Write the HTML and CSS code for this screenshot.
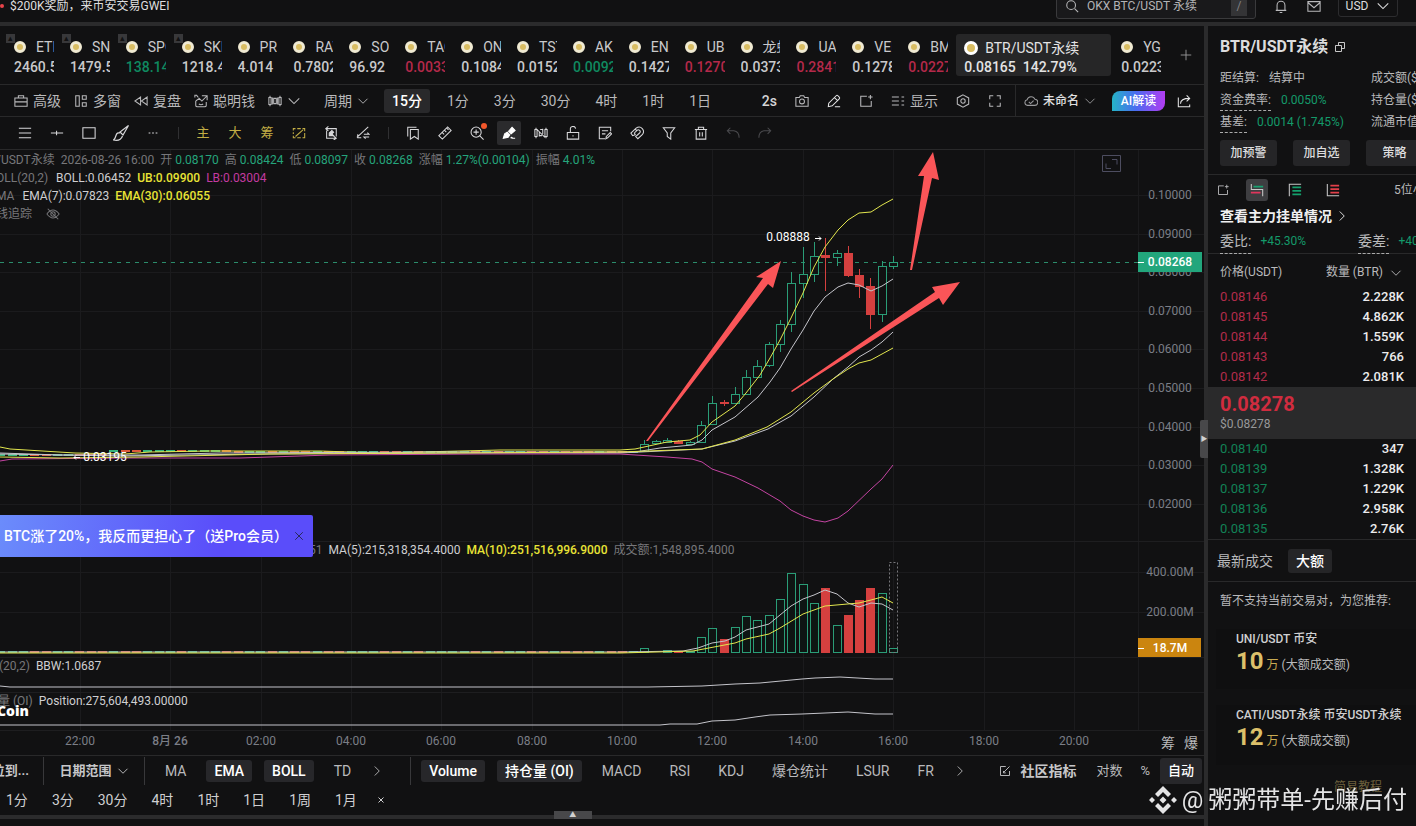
FILE: index.html
```html
<!DOCTYPE html>
<html lang="zh-CN">
<head>
  <meta charset="UTF-8">
  <meta name="viewport" content="width=device-width, initial-scale=1.0">
  <title>BTR/USDT永续</title>
  <link rel="stylesheet" href="styles.css">
</head>
<body>
  <!-- icon sprite -->
  <svg class="sprite" xmlns="http://www.w3.org/2000/svg">
    <symbol id="i-down" viewBox="0 0 16 16"><path d="M2 5l6 6 6-6"/></symbol>
    <symbol id="i-right" viewBox="0 0 16 16"><path d="M5 2l6 6-6 6"/></symbol>
    <symbol id="i-close" viewBox="0 0 16 16"><path d="M3 3l10 10M13 3L3 13"/></symbol>
    <symbol id="i-plus" viewBox="0 0 16 16"><path d="M8 1v14M1 8h14"/></symbol>
    <symbol id="i-search" viewBox="0 0 16 16"><circle cx="7" cy="7" r="5"/><path d="M11 11l4 4"/></symbol>
    <symbol id="i-bell" viewBox="0 0 16 16"><path d="M2 13h12M3.500 13V7a4.500 4.500 0 0 1 9 0v6M6.500 15.500h3"/></symbol>
    <symbol id="i-mail" viewBox="0 0 16 16"><path d="M1 3h14v11H1zM1 4l7 6 7-6"/></symbol>
    <symbol id="i-case" viewBox="0 0 16 16"><path d="M1 4.500h14V14H1zM5 4.500V2h6v2.500M1 9h14"/></symbol>
    <symbol id="i-multi" viewBox="0 0 16 16"><path d="M2 2h4v12H2zM9.500 2H14v4H9.500zM9.500 10H14v4H9.500z"/></symbol>
    <symbol id="i-replay" viewBox="0 0 16 16"><path d="M7.500 3.500v9L1 8zM15 3.500v9L8.500 8z"/></symbol>
    <symbol id="i-smart" viewBox="0 0 16 16"><path d="M5 4L3 1.500H1V4M9 2h6v5M2 8v5q0 1.500 2 1.500h8q2 0 2-1.500V9M2 8l4-3 3 3 6-6M5.500 11.500q2.500 1.500 5 0"/></symbol>
    <symbol id="i-candles" viewBox="0 0 16 16"><path d="M1 4h2.500v8H1zM6.500 5h3v6h-3zM12.500 4H15v8h-2.500zM2.300 2v2M2.300 12v2M5 4v8M11 4v8M13.700 2v2M13.700 12v2"/></symbol>
    <symbol id="i-camera" viewBox="0 0 16 16"><path d="M1 4h4l1-2h4l1 2h4v10H1z"/><circle cx="8" cy="8.500" r="2.800"/></symbol>
    <symbol id="i-pencil" viewBox="0 0 16 16"><path d="M1.500 14.500L2 10.500 10.500 2q1-1 2 0l1.500 1.500q1 1 0 2L6 13.500zM8.500 4L12 7.500M9 14.500h6"/></symbol>
    <symbol id="i-addbox" viewBox="0 0 16 16"><path d="M9 2.500H2V14h12V8M13 1v5M10.500 3.500h5"/></symbol>
    <symbol id="i-list" viewBox="0 0 16 16"><path d="M1 3.500h8M1 8h8M1 12.500h8M12 3.500h3M12 8h3M12 12.500h3"/></symbol>
    <symbol id="i-hex" viewBox="0 0 16 16"><path d="M8 1l6.500 3.500v7L8 15l-6.500-3.500v-7z"/><circle cx="8" cy="8" r="2.500"/></symbol>
    <symbol id="i-full" viewBox="0 0 16 16"><path d="M2 6V2h4M10 2h4v4M14 10v4h-4M6 14H2v-4"/></symbol>
    <symbol id="i-cloud" viewBox="0 0 16 16"><path d="M4 13a3.300 3.300 0 0 1-.4-6.500A4.700 4.700 0 0 1 12.500 6 3.500 3.500 0 0 1 12 13zM5.500 9l2 2 3.500-3.500"/></symbol>
    <symbol id="i-share" viewBox="0 0 16 16"><path d="M1.500 4v10.500h13V12M4 11q0-6 10-6M11 1.500L14.500 5 11 8.500"/></symbol>
    <symbol id="i-menu" viewBox="0 0 16 16"><path d="M1 2.500h14M1 8h14M1 13.500h14"/></symbol>
    <symbol id="i-hline" viewBox="0 0 16 16"><path d="M1 8h14M7.500 5.500v5"/></symbol>
    <symbol id="i-rect" viewBox="0 0 16 16"><path d="M1 2h14v12H1z"/></symbol>
    <symbol id="i-brush" viewBox="0 0 16 16"><path d="M15.500.5L7 7l3 3zM7 8Q4 7 3 10.500T.5 15q7 1.500 9-4"/></symbol>
    <symbol id="i-dots" viewBox="0 0 16 16"><path d="M3 8h2M7 8h2M11 8h2"/></symbol>
    <symbol id="i-slashbox" viewBox="0 0 16 16"><path d="M1.500 5V3H4M6 3h4M12 3h2.500v3M14.500 8v5.500H12M10 13.500H6M4 13.500H1.500V11M1.500 9V7M4 12l8.500-7.500"/></symbol>
    <symbol id="i-loop" viewBox="0 0 16 16"><path d="M2 3h12v9M14 14H3V5M5 .5L2 3l3 2.500M11 11.500l3 2.500-3 2"/><path fill="currentColor" d="M6 11V8l3-3 2 2-2 2 2 2z"/></symbol>
    <symbol id="i-tool" viewBox="0 0 16 16"><path d="M1 13L14 1M2 9.500v4h4M9 9.500h6l-2-2M15 12.500H9l2 2"/></symbol>
    <symbol id="i-mark" viewBox="0 0 16 16"><path d="M5 4h9v11l-4.500-3L5 15zM2 12V1.500h10"/></symbol>
    <symbol id="i-ruler" viewBox="0 0 16 16"><path d="M1 11L11 1l4 4L5 15zM5 7.500l2 2M7.500 5l2 2M10 2.500l2 2"/></symbol>
    <symbol id="i-zoom" viewBox="0 0 16 16"><circle cx="7" cy="7" r="5.800"/><path d="M11 11l4.500 4.500M7 4v6M4 7h6"/></symbol>
    <symbol id="i-marker" viewBox="0 0 16 16"><path fill="currentColor" d="M1.500 14L3 9l3-2 3 3-2 3zM7.500 6l4-4.500L15 5l-4.500 4zM10 14q1-2 2 0h3"/></symbol>
    <symbol id="i-wave" viewBox="0 0 16 16"><path d="M1 4h2.500v8H1zM12.500 4H15v8h-2.500zM2.300 2v2M2.300 12v2M13.700 2v2M13.700 12v2M3.500 4l9 9M6 12V7M10 3v6M7 4h3M6 11h3"/></symbol>
    <symbol id="i-lock" viewBox="0 0 16 16"><path d="M1.500 7.500h13V15h-13zM5 7.500V4a3 3 0 0 1 6-1M8 10.500v1.500"/></symbol>
    <symbol id="i-note" viewBox="0 0 16 16"><path d="M14.500 6V1.500h-13v13H8M4.500 5.500h7M4.500 9h4M9 14.500l.5-2.500 4.500-4.500 1.500 1.500-4.500 4.500z"/></symbol>
    <symbol id="i-magnet" viewBox="0 0 16 16"><path d="M6 10L3 11 1 8l6-5.500Q11-.5 14 3t0 7l-5 4.500-2.500-2.500L11 8q1.500-1.500 0-3T8 5L5 8zM6 3.500L8 5.500"/></symbol>
    <symbol id="i-filter" viewBox="0 0 16 16"><path d="M1.500 2h13L10 8v7l-4-3V8z"/></symbol>
    <symbol id="i-trash" viewBox="0 0 16 16"><path d="M1 4h14M2.500 4v11h11V4M5 4V1.500h6V4M6.500 7v5M9.500 7v5"/></symbol>
    <symbol id="i-undo" viewBox="0 0 16 16"><path d="M5 2L1.500 5.500 5 9M1.500 5.500H9q6 1 6 8"/></symbol>
    <symbol id="i-redo" viewBox="0 0 16 16"><path d="M11 2l3.500 3.500L11 9M14.500 5.500H7q-6 1-6 8"/></symbol>
    <symbol id="i-eye" viewBox="0 0 16 16"><path d="M1 8q7-9 14 0-7 9-14 0M2 2l12 12"/><circle cx="8" cy="8" r="2.500"/></symbol>
    <symbol id="i-edit" viewBox="0 0 16 16"><path d="M9 2H2v12h12V8M6 10l8-8M6 8v2.500h3"/></symbol>
    <symbol id="i-copy" viewBox="0 0 16 16"><path d="M2 6h8v8H2zM6 6V2h8v8h-4"/></symbol>
    <symbol id="i-book" viewBox="0 0 16 16"><path d="M1.500 1v6.500h13V15" stroke="#c8c8c8"/><path d="M4 4h11" stroke="#19a070" stroke-width="2"/><path d="M1 11h11" stroke="#e0355c" stroke-width="2"/></symbol>
    <symbol id="i-bids" viewBox="0 0 16 16"><path d="M1.500 15V1.500H15" stroke="#c8c8c8"/><path d="M5 5h10M5 9h10M5 13h10" stroke="#14a06c" stroke-width="2"/></symbol>
    <symbol id="i-asks" viewBox="0 0 16 16"><path d="M1.500 1v13.500H15" stroke="#c8c8c8"/><path d="M5 3h10M5 7h10M5 11h10" stroke="#e2404a" stroke-width="2"/></symbol>
  </svg>

  <header class="topbar">
    <span class="live-dot"></span>
    <a class="notice" href="#">$200K奖励，来币安交易GWEI</a>
    <label class="search">
      <svg class="icon"><use href="#i-search"/></svg>
      <input type="text" aria-label="搜索" value="OKX BTC/USDT 永续">
      <kbd>/</kbd>
    </label>
    <button class="top-icon" aria-label="通知"><svg class="icon"><use href="#i-bell"/></svg></button>
    <button class="top-icon" aria-label="消息"><svg class="icon"><use href="#i-mail"/></svg></button>
    <button class="currency">USD <svg class="icon"><use href="#i-down"/></svg></button>
  </header>

  <div class="layout">
    <main class="main">
      <nav class="tickers" id="tickers"></nav>

      <div class="toolbar">
        <button class="tool"><svg class="icon"><use href="#i-case"/></svg>高级</button>
        <button class="tool"><svg class="icon"><use href="#i-multi"/></svg>多窗</button>
        <button class="tool"><svg class="icon"><use href="#i-replay"/></svg>复盘</button>
        <button class="tool"><svg class="icon"><use href="#i-smart"/></svg>聪明钱</button>
        <button class="tool" aria-label="图表类型"><svg class="icon"><use href="#i-candles"/></svg><svg class="icon"><use href="#i-down"/></svg></button>
        <button class="tool period">周期<svg class="icon small"><use href="#i-down"/></svg></button>
        <div class="intervals">
          <button class="active">15分</button>
          <button>1分</button>
          <button>3分</button>
          <button>30分</button>
          <button>4时</button>
          <button>1时</button>
          <button>1日</button>
        </div>
        <div class="toolbar-right">
          <b>2s</b>
          <button class="tool" aria-label="截图"><svg class="icon"><use href="#i-camera"/></svg></button>
          <button class="tool bright" aria-label="画线"><svg class="icon"><use href="#i-pencil"/></svg></button>
          <button class="tool" aria-label="新窗口"><svg class="icon"><use href="#i-addbox"/></svg></button>
          <button class="tool"><svg class="icon"><use href="#i-list"/></svg>显示</button>
          <button class="tool" aria-label="设置"><svg class="icon"><use href="#i-hex"/></svg></button>
          <button class="tool" aria-label="全屏"><svg class="icon"><use href="#i-full"/></svg></button>
        </div>
        <div class="toolbar-end">
          <button class="tool layout-name"><svg class="icon"><use href="#i-cloud"/></svg>未命名<svg class="icon small"><use href="#i-down"/></svg></button>
          <button class="ai">AI解读</button>
          <button class="tool bright" aria-label="分享"><svg class="icon"><use href="#i-share"/></svg></button>
        </div>
      </div>

      <div class="drawbar">
        <button aria-label="菜单"><svg class="icon"><use href="#i-menu"/></svg></button>
        <button aria-label="水平线"><svg class="icon"><use href="#i-hline"/></svg></button>
        <button aria-label="矩形"><svg class="icon"><use href="#i-rect"/></svg></button>
        <button aria-label="画笔"><svg class="icon wide"><use href="#i-brush"/></svg></button>
        <button aria-label="更多"><svg class="icon"><use href="#i-dots"/></svg></button>
        <i></i>
        <button class="gold">主</button>
        <button class="gold">大</button>
        <button class="gold">筹</button>
        <button class="gold" aria-label="区间"><svg class="icon"><use href="#i-slashbox"/></svg></button>
        <button aria-label="循环"><svg class="icon"><use href="#i-loop"/></svg></button>
        <button aria-label="对比"><svg class="icon"><use href="#i-tool"/></svg></button>
        <i></i>
        <button aria-label="书签"><svg class="icon"><use href="#i-mark"/></svg></button>
        <button aria-label="测量"><svg class="icon"><use href="#i-ruler"/></svg></button>
        <button class="dot" aria-label="放大"><svg class="icon"><use href="#i-zoom"/></svg></button>
        <button class="active" aria-label="标记"><svg class="icon"><use href="#i-marker"/></svg></button>
        <button aria-label="波段"><svg class="icon"><use href="#i-wave"/></svg></button>
        <button aria-label="锁定"><svg class="icon"><use href="#i-lock"/></svg></button>
        <button aria-label="笔记"><svg class="icon"><use href="#i-note"/></svg></button>
        <button aria-label="磁吸"><svg class="icon"><use href="#i-magnet"/></svg></button>
        <button aria-label="筛选"><svg class="icon"><use href="#i-filter"/></svg></button>
        <button aria-label="删除"><svg class="icon"><use href="#i-trash"/></svg></button>
        <button class="dim" aria-label="撤销"><svg class="icon"><use href="#i-undo"/></svg></button>
        <button class="dim" aria-label="重做"><svg class="icon"><use href="#i-redo"/></svg></button>
      </div>

      <section class="chart">
        <svg id="chart" viewBox="0 150 1204 605" preserveAspectRatio="xMaxYMin slice"></svg>

        <div class="legend main-legend">
          <p><span>/USDT永续</span><span>2026-08-26 16:00</span><span>开 <em>0.08170</em></span><span>高 <em>0.08424</em></span><span>低 <em>0.08097</em></span><span>收 <em>0.08268</em></span><span>涨幅 <em>1.27%(0.00104)</em></span><span>振幅 <em>4.01%</em></span></p>
          <p class="wide"><span>OLL(20,2)</span><span class="w">BOLL:0.06452</span><span class="y">UB:0.09900</span><span class="m">LB:0.03004</span></p>
          <p class="wide"><span>MA</span><span class="w">EMA(7):0.07823</span><span class="y">EMA(30):0.06055</span></p>
          <p class="track"><span>钱追踪</span><svg class="icon"><use href="#i-eye"/></svg></p>
        </div>
        <div class="legend vol-legend">
          <p><span>51</span><span class="w">MA(5):215,318,354.4000</span><span class="y">MA(10):251,516,996.9000</span><span>成交额:1,548,895.4000</span></p>
        </div>
        <div class="legend bbw-legend"><p><span>(20,2)</span><span class="w">BBW:1.0687</span></p></div>
        <div class="legend oi-legend"><p><span>量 (OI)</span><span class="w">Position:275,604,493.00000</span></p></div>
        <strong class="brand">Coin</strong>

        <div class="banner">
          <a href="#">BTC涨了20%，我反而更担心了（送Pro会员）</a>
          <button aria-label="关闭"><svg class="icon small"><use href="#i-close"/></svg></button>
        </div>
        <div class="chart-corner"><button>筹</button><button>爆</button></div>
      </section>

      <div class="indicators">
        <button class="strong first">位到...</button>
        <button class="strong range">日期范围<svg class="icon small"><use href="#i-down"/></svg></button>
        <div class="group main-group">
          <button>MA</button>
          <button class="active">EMA</button>
          <button class="active">BOLL</button>
          <button>TD</button>
          <button class="next" aria-label="更多主图指标"><svg class="icon small"><use href="#i-right"/></svg></button>
        </div>
        <div class="group sub-group">
          <button class="active">Volume</button>
          <button class="active">持仓量 (OI)</button>
          <button>MACD</button>
          <button>RSI</button>
          <button>KDJ</button>
          <button>爆仓统计</button>
          <button>LSUR</button>
          <button>FR</button>
          <button class="next" aria-label="更多副图指标"><svg class="icon small"><use href="#i-right"/></svg></button>
        </div>
        <div class="scale">
          <button class="strong"><svg class="icon small"><use href="#i-edit"/></svg>社区指标</button>
          <button>对数</button>
          <button>%</button>
          <button class="active">自动</button>
        </div>
      </div>

      <div class="frames">
        <button>1分</button>
        <button>3分</button>
        <button>30分</button>
        <button>4时</button>
        <button>1时</button>
        <button>1日</button>
        <button>1周</button>
        <button>1月</button>
        <button class="frames-close" aria-label="关闭"><svg class="icon tiny"><use href="#i-close"/></svg></button>
      </div>
      <div class="bottom-split"><button class="handle-up" aria-label="展开">▲</button></div>
    </main>

    <div class="split"><button class="handle-side" aria-label="收起">▶</button></div>

    <aside class="side">
      <h1>BTR/USDT永续 <svg class="icon small"><use href="#i-copy"/></svg></h1>
      <dl class="stats">
        <div><dt class="plain">距结算:</dt><dd>结算中</dd></div><span>成交额($)</span>
        <div><dt>资金费率:</dt><dd class="up">0.0050%</dd></div><span>持仓量($)</span>
        <div><dt>基差:</dt><dd class="up">0.0014 (1.745%)</dd></div><span>流通市值</span>
      </dl>
      <div class="actions">
        <button>加预警</button>
        <button>加自选</button>
        <button>策略</button>
      </div>

      <div class="book-tools">
        <button aria-label="新窗口"><svg class="icon small"><use href="#i-addbox"/></svg></button>
        <button class="active" aria-label="买卖盘"><svg class="icon"><use href="#i-book"/></svg></button>
        <button aria-label="买盘"><svg class="icon"><use href="#i-bids"/></svg></button>
        <button aria-label="卖盘"><svg class="icon"><use href="#i-asks"/></svg></button>
        <span>5位小数</span>
      </div>
      <a class="depth-link" href="#">查看主力挂单情况 <svg class="icon small"><use href="#i-right"/></svg></a>
      <div class="ratio">
        <div><span>委比:</span><em>+45.30%</em></div>
        <div><span>委差:</span><em>+40.12K</em></div>
      </div>

      <table class="book">
        <thead><tr><th>价格(USDT)</th><th>数量 (BTR) <svg class="icon small"><use href="#i-down"/></svg></th></tr></thead>
        <tbody class="asks">
          <tr><td>0.08146</td><td>2.228K</td></tr>
          <tr><td>0.08145</td><td>4.862K</td></tr>
          <tr><td>0.08144</td><td>1.559K</td></tr>
          <tr><td>0.08143</td><td>766</td></tr>
          <tr><td>0.08142</td><td>2.081K</td></tr>
        </tbody>
        <tbody class="last">
          <tr><td colspan="2"><strong>0.08278</strong><small>$0.08278</small></td></tr>
        </tbody>
        <tbody class="bids">
          <tr><td>0.08140</td><td>347</td></tr>
          <tr><td>0.08139</td><td>1.328K</td></tr>
          <tr><td>0.08137</td><td>1.229K</td></tr>
          <tr><td>0.08136</td><td>2.958K</td></tr>
          <tr><td>0.08135</td><td>2.76K</td></tr>
        </tbody>
      </table>

      <div class="trade-tabs">
        <button>最新成交</button>
        <button class="active">大额</button>
      </div>
      <p class="tip">暂不支持当前交易对，为您推荐:</p>
      <div class="card"><h2>UNI/USDT 币安</h2><p><b>10</b><i>万</i>(大额成交额)</p></div>
      <div class="card"><h2>CATI/USDT永续 币安USDT永续</h2><p><b>12</b><i>万</i>(大额成交额)</p></div>
      <a class="guide" href="#">简易教程</a>
    </aside>
  </div>

  <div class="watermark">
    <svg viewBox="0 0 28 28"><path d="M14 0l8 8-3 3-5-5-5 5-3-3zM14 28l8-8-3-3-5 5-5-5-3 3zM3 11l3 3-3 3-3-3zM25 11l3 3-3 3-3-3zM14 10.500l3.500 3.500-3.500 3.500-3.500-3.500z"/></svg>
    <span>@</span><span>粥粥带单-先赚后付</span>
  </div>

  <script src="chart.js"></script>
</body>
</html>
```
FILE: styles.css
```css
* {
  box-sizing: border-box;
}
body {
  margin: 0;
  background: #111112;
  color: #b9b9bb;
  font-family: Roboto, "Noto Sans CJK SC", sans-serif;
  font-size: 14px;
  line-height: 20px;
  height: 100vh;
  overflow: hidden;
  display: flex;
  flex-direction: column;
}
button {
  font: inherit;
  color: inherit;
  background: none;
  border: 0;
  padding: 0;
  white-space: nowrap;
  display: inline-flex;
  align-items: center;
  justify-content: center;
}
a {
  color: inherit;
  text-decoration: none;
}
p, h1, h2, dl, dd {
  margin: 0;
}
em, i {
  font-style: normal;
}
.sprite {
  position: absolute;
  width: 0;
  height: 0;
}
.icon {
  width: 14px;
  height: 14px;
  flex: none;
  fill: none;
  stroke: currentColor;
  stroke-width: 1.2;
}
.icon.small {
  width: 12px;
  height: 12px;
}
.icon.wide {
  width: 16px;
  height: 16px;
}
.icon.tiny {
  width: 8px;
  height: 8px;
  stroke-width: 2;
}

/* top bar */
.topbar {
  display: flex;
  align-items: center;
  flex: none;
  height: 32px;
  margin-top: -10px;
  padding-right: 18px;
  font-size: 12px;
}
.live-dot {
  width: 4px;
  height: 4px;
  border-radius: 50%;
  background: #e8434a;
  margin-right: 6px;
}
.notice {
  color: #dededf;
  margin-right: auto;
}
.search {
  display: flex;
  align-items: center;
  width: 200px;
  height: 26px;
  padding: 0 8px;
  border: 1px solid #3a3a3c;
  border-radius: 3px;
  background: #19191b;
}
.search input {
  flex: 1;
  min-width: 0;
  margin-left: 8px;
  padding: 0;
  border: 0;
  background: none;
  color: #b4b4b6;
  font: inherit;
}
.search kbd {
  width: 16px;
  background: #343436;
  color: #808083;
  text-align: center;
  font-family: inherit;
}
.top-icon {
  margin-left: 17px;
}
.top-icon .icon {
  width: 16px;
}
.currency {
  width: 60px;
  height: 22px;
  margin-left: 16px;
  gap: 8px;
  border: 1px solid #2c2c2e;
  border-radius: 3px;
  color: #dededf;
}

/* page frame */
.layout {
  display: flex;
  flex: 1;
  min-height: 0;
  border-top: 4px solid #2b2b2c;
}
.main {
  flex: 1;
  min-width: 0;
  display: flex;
  flex-direction: column;
}
.split {
  position: relative;
  width: 4px;
  background: #2b2b2c;
}
.handle-side {
  position: absolute;
  top: 394px;
  right: 0;
  width: 8px;
  height: 38px;
  background: #48484a;
  color: #d0d0d0;
  font-size: 7px;
  border-radius: 2px 0 0 2px;
}

/* tickers */
.tickers {
  display: flex;
  flex: none;
  height: 59px;
  border-bottom: 1px solid #29292a;
}
.ticker {
  position: relative;
  flex: 1;
  min-width: 0;
  padding: 11px 2px 0 14px;
  font-weight: 500;
  text-align: left;
  color: #c9c9cb;
  flex-direction: column;
  align-items: stretch;
  justify-content: flex-start;
}
.ticker > span {
  display: flex;
  align-items: center;
  overflow: hidden;
}
.ticker .name {
  font-weight: 400;
}
.ticker .name::before {
  content: "";
  flex: none;
  width: 6px;
  height: 6px;
  margin-right: 10px;
  border: 3px solid #f0ead2;
  border-radius: 50%;
  background: #d9bd62;
  box-sizing: content-box;
}
.ticker.pinned::after {
  content: "▴";
  position: absolute;
  left: 6px;
  top: 8px;
  width: 9px;
  height: 9px;
  background: #38383a;
  color: #111112;
  font-size: 9px;
  line-height: 9px;
  text-align: center;
}
.ticker.rise .price {
  color: #0f8a60;
}
.ticker.fall .price {
  color: #b5294a;
}
.ticker.current {
  flex: none;
  width: 155px;
  height: 42px;
  margin: 8px -4px 0 6px;
  padding: 4px 8px 0;
  border-radius: 3px;
  background: #262627;
  color: #e3e3e4;
}
.ticker.current .name::before {
  width: 8px;
  height: 8px;
  margin-right: 7px;
  border-color: #fff;
}
.add-ticker {
  width: 41px;
  padding-left: 4px;
  color: #9a9a9c;
}

/* main toolbar */
.toolbar {
  display: flex;
  flex: none;
  align-items: center;
  height: 32px;
  padding-left: 14px;
  border-bottom: 1px solid #29292a;
  gap: 13px;
}
.tool {
  gap: 5px;
}
.tool.bright {
  color: #e6e6e7;
}
.tool.period {
  margin-left: 10px;
}
.intervals {
  display: flex;
  gap: 9px;
  margin-left: 2px;
}
.intervals button {
  height: 24px;
  padding: 0 8px;
  border-radius: 3px;
}
.intervals .active {
  background: #29292b;
  color: #fff;
  font-weight: 500;
}
.toolbar-right {
  display: flex;
  align-items: center;
  gap: 18px;
  margin-left: auto;
}
.toolbar-right b {
  font-weight: 500;
  color: #d5d5d6;
}
.toolbar-end {
  display: flex;
  align-items: center;
  align-self: stretch;
  padding: 0 13px 0 8px;
  border-left: 1px solid #29292a;
}
.layout-name {
  color: #e0e0e1;
  font-size: 12px;
  font-weight: 500;
}
.layout-name .icon {
  color: #9a9a9c;
}
.ai {
  width: 53px;
  height: 20px;
  margin: 0 12px 0 16px;
  border-radius: 8px 0 8px 0;
  background: linear-gradient(90deg, #25b4c6, #4a6cf0 45%, #b23cf2);
  color: #fff;
  font-size: 12px;
  font-weight: 500;
}

/* drawing tools */
.drawbar {
  display: flex;
  flex: none;
  align-items: center;
  height: 33px;
  padding-left: 13px;
  border-bottom: 1px solid #29292a;
  gap: 8px;
}
.drawbar button {
  position: relative;
  width: 24px;
  height: 24px;
  border-radius: 2px;
  color: #d8d8da;
  font-size: 13px;
}
.drawbar i {
  width: 1px;
  height: 12px;
  margin: 0 4px 0 5px;
  background: #303032;
}
.drawbar .gold {
  color: #c3ae45;
}
.drawbar .active {
  background: #2b2b2d;
  color: #fff;
}
.drawbar .dim {
  color: #4a4a4d;
}
.drawbar .dot::after {
  content: "";
  position: absolute;
  top: 2px;
  right: 2px;
  width: 6px;
  height: 6px;
  border-radius: 50%;
  background: #f2572b;
}

/* chart */
.chart {
  position: relative;
  flex: none;
  height: 605px;
  overflow: hidden;
}
#chart {
  display: block;
  width: 100%;
  height: 100%;
}
#chart text {
  font-size: 12px;
  fill: #7b7e86;
  text-anchor: middle;
}
#chart .note,
#chart .tag {
  fill: #fff;
}
#chart .tag,
#chart .day {
  font-weight: 500;
}
.grid {
  stroke: #1b1b1d;
}
.pane {
  stroke: #1e1e20;
}
.line {
  fill: none;
  stroke-linejoin: round;
}
.line.yellow { stroke: #e2e64e; }
.line.white { stroke: #c4c4ca; }
.line.magenta { stroke: #c444a2; }
.candle-up {
  fill: #111112;
  stroke: #2a9d77;
}
.candle-down {
  fill: #d5403f;
  stroke: #d5403f;
}
.vol-up {
  fill: #0e1513;
  stroke: #2a9d77;
}
.arrow {
  fill: #fa5558;
}
.legend {
  position: absolute;
  left: 0;
  font-size: 12px;
  line-height: 18px;
  white-space: nowrap;
  color: #77777a;
}
.legend p {
  display: flex;
  align-items: center;
  gap: 6px;
}
.legend .wide > :nth-child(2) {
  margin-left: 2px;
}
.legend .track {
  gap: 14px;
}
.legend em { color: #25a57c; }
.legend .w { color: #cfcfd1; }
.legend .y { color: #e9e436; font-weight: 500; }
.legend .m { color: #c43aa0; }
.main-legend { top: 1px; left: -4px; }
.vol-legend { top: 391px; left: 309px; }
.bbw-legend { top: 507px; left: -1px; }
.oi-legend { top: 542px; left: -2px; }
.brand {
  position: absolute;
  top: 551px;
  left: -3px;
  color: #fff;
  font-family: "Noto Sans", sans-serif;
  font-weight: 900;
}
.banner {
  position: absolute;
  top: 365px;
  left: 0;
  width: 313px;
  height: 42px;
  padding: 0 8px 0 4px;
  display: flex;
  align-items: center;
  justify-content: space-between;
  border-radius: 0 2px 2px 0;
  background: linear-gradient(100deg, #6b8cfb, #5a4dfa 70%);
  color: #fff;
  font-weight: 500;
  white-space: nowrap;
}
.banner button {
  color: #23264c;
}
.chart-corner {
  position: absolute;
  right: 6px;
  bottom: 2px;
  display: flex;
  gap: 9px;
}

/* indicator bar */
.indicators {
  display: flex;
  flex: none;
  align-items: center;
  height: 30px;
  border-top: 1px solid #29292a;
}
.indicators button {
  height: 22px;
  padding: 0 8px;
  border-radius: 3px;
}
.indicators .active {
  background: #27272a;
  color: #fff;
  font-weight: 500;
}
.indicators .strong {
  gap: 5px;
  padding: 0;
  font-weight: 700;
  font-size: 13px;
  color: #c6c6c8;
}
.indicators .first {
  width: 44px;
  height: 28px;
  padding-right: 14px;
  justify-content: flex-end;
  border-radius: 0;
  border-right: 1px solid #38383a;
}
.indicators .range {
  width: 101px;
  height: 28px;
  border-radius: 0;
  border-right: 1px solid #38383a;
}
.group {
  display: flex;
  align-items: center;
  height: 28px;
  gap: 12px;
  padding: 0 10px 0 12px;
}
.main-group {
  border-right: 1px solid #38383a;
  padding-right: 27px;
}
.sub-group {
  padding-left: 10px;
}
.group .next {
  padding: 0;
}
.scale {
  display: flex;
  align-items: center;
  gap: 2px;
  margin-left: auto;
  padding-right: 2px;
}
.scale .strong {
  margin-right: 10px;
  gap: 9px;
  font-size: 14px;
}
.scale .active {
  height: 26px;
}
.scale button {
  font-size: 13px;
}

/* time frames */
.frames {
  display: flex;
  flex: none;
  align-items: center;
  height: 30px;
  padding-left: 6px;
  gap: 24px;
  color: #cfcfd1;
}
.frames-close {
  margin-left: -4px;
}
.bottom-split {
  position: relative;
  flex: none;
  height: 4px;
  background: #2b2b2c;
}
.handle-up {
  position: absolute;
  left: 46%;
  bottom: 0;
  width: 38px;
  height: 8px;
  background: #48484a;
  color: #d0d0d0;
  font-size: 7px;
  line-height: 8px;
}

/* side panel */
.side {
  width: 208px;
  overflow: hidden;
  border-radius: 4px 0 0 0;
  font-size: 12px;
  white-space: nowrap;
}
.side h1 {
  display: flex;
  align-items: center;
  gap: 6px;
  height: 41px;
  padding-left: 12px;
  color: #dcdcdd;
  font-size: 16px;
  font-weight: 700;
}
.stats {
  display: grid;
  grid-template-columns: 151px auto;
  grid-auto-rows: 22px;
  align-items: center;
  padding-left: 12px;
}
.stats div {
  display: flex;
  gap: 10px;
}
.stats dt {
  height: 21px;
  border-bottom: 1px dashed #aaa;
}
.stats .plain {
  border: 0;
}
.up {
  color: #149a6a;
}
.actions {
  display: flex;
  gap: 16px;
  padding: 7px 0 8px 12px;
  border-bottom: 1px solid #29292a;
}
.actions button {
  flex: none;
  width: 57px;
  height: 26px;
  border-radius: 3px;
  background: #252527;
  color: #dededf;
  font-weight: 500;
}
.book-tools {
  display: flex;
  align-items: center;
  height: 29px;
  padding-left: 4px;
  gap: 16px;
}
.book-tools button {
  flex: none;
  width: 22px;
  height: 22px;
  border-radius: 3px;
}
.book-tools button:first-child {
  margin-right: -4px;
}
.book-tools .active {
  background: #3e3e41;
}
.book-tools span {
  margin-left: 34px;
}
.depth-link {
  display: flex;
  align-items: center;
  gap: 4px;
  height: 24px;
  padding-left: 12px;
  color: #f0f0f1;
  font-size: 14px;
  font-weight: 700;
}
.ratio {
  display: grid;
  grid-template-columns: 138px auto;
  height: 26px;
  padding-left: 12px;
  border-bottom: 1px solid #29292a;
}
.ratio div {
  display: flex;
  align-items: center;
  gap: 9px;
}
.ratio span {
  height: 26px;
  border-bottom: 1px dashed #aaa;
  font-size: 14px;
  line-height: 26px;
}
.ratio em {
  color: #149a6a;
}
.book {
  width: 100%;
  border-collapse: collapse;
  border-bottom: 1px solid #29292a;
}
.book th {
  height: 33px;
  padding: 3px 0 0 12px;
  font-weight: 400;
  text-align: left;
}
.book th:last-child {
  padding-right: 14px;
  text-align: right;
}
.book th .icon {
  margin-left: 4px;
  vertical-align: middle;
}
.book td {
  height: 20px;
  padding: 0 0 0 12px;
  font-size: 13px;
}
.book td:last-child:not(:first-child) {
  padding-right: 12px;
  color: #ececed;
  font-weight: 500;
  text-align: right;
}
.asks td:first-child {
  color: #b12c4b;
}
.bids td:first-child {
  color: #128257;
}
.book .last td {
  height: 52px;
  padding-top: 2px;
  background: #2a2a2b;
}
.last strong,
.last small {
  display: block;
  font-size: 20px;
  font-weight: 700;
  color: #d02c3f;
}
.last small {
  font-size: 12px;
  font-weight: 400;
  color: #98989a;
}
.trade-tabs {
  display: flex;
  align-items: center;
  height: 41px;
  margin-top: 1px;
  padding-left: 9px;
  gap: 15px;
  border-bottom: 1px solid #29292a;
  font-size: 14px;
}
.trade-tabs .active {
  width: 44px;
  height: 24px;
  border-radius: 3px;
  background: #252527;
  color: #fff;
  font-weight: 500;
}
.tip {
  padding: 9px 0 10px 12px;
}
.card {
  height: 60px;
  margin: 8px 0 16px 8px;
  padding: 0 20px;
  background: #0f0f10;
}
.card h2 {
  font-size: 12px;
  font-weight: 500;
  color: #cfcfd1;
}
.card b {
  color: #dcc06a;
  font-size: 24px;
  line-height: 24px;
}
.card i {
  color: #c9ab52;
  margin: 0 3px;
}
.guide {
  display: block;
  margin: -4px 0 0 126px;
  color: #6d603c;
}
.watermark {
  position: fixed;
  right: 9px;
  bottom: 8px;
  display: flex;
  align-items: center;
  gap: 5px;
  color: #e4e4e5;
  font-size: 24px;
  line-height: 36px;
  white-space: nowrap;
}
.watermark svg {
  width: 28px;
  height: 28px;
  fill: currentColor;
}
```
FILE: chart.js
```js
// ticker strip: name, price, state
const tickers = [
  ['ETH', '2460.52', 'pinned'], ['SNDK', '1479.50', 'pinned'], ['SPCX', '138.140', 'pinned rise'],
  ['SKHX', '1218.40', 'pinned'], ['PR', '4.014', ''], ['RAVE', '0.78020', ''], ['SO', '96.92', ''],
  ['TAC', '0.00330', 'fall'], ['ONG', '0.10840', ''], ['TST', '0.01520', ''], ['AKE', '0.00920', 'rise'],
  ['ENA', '0.14270', ''], ['UB', '0.12700', 'fall'], ['龙虾', '0.03730', ''], ['UAI', '0.28410', 'fall'],
  ['VEL', '0.12780', ''], ['BMT', '0.02270', 'fall'],
  ['BTR/USDT永续', '0.08165&nbsp; 142.79%', 'current'], ['YGG', '0.02230', '']
];
document.getElementById('tickers').innerHTML = tickers.map(([name, price, state]) =>
  `<button class="ticker ${state}"><span class="name">${name}</span><span class="price">${price}</span></button>`
).join('') + '<button class="add-ticker" aria-label="添加"><svg class="icon small"><use href="#i-plus"/></svg></button>';

const STEP = 11.3;
const LAST_X = 893;
const out = [];
const add = s => out.push(s);
const hline = (y, cls) => add(`<path class="${cls}" d="M0 ${y}.5H1204"/>`);
const line = (cls, pts) => add(`<polyline class="line ${cls}" points="${pts}"/>`);

// grid
const times = ['22:00', '8月 26', '02:00', '04:00', '06:00', '08:00', '10:00', '12:00', '14:00', '16:00', '18:00', '20:00'];
times.forEach((t, i) => {
  const x = Math.round(80 + i * 90.35);
  add(`<path class="grid" d="M${x}.5 150V730"/>`);
  add(`<text class="${i === 1 ? 'day' : ''}" x="${x}" y="745">${t}</text>`);
});
add('<path class="grid" d="M1138.5 150V730"/>');
for (let i = 0; i < 9; i++) {
  const y = Math.round(195 + i * 38.6);
  hline(y, 'grid');
  // the 0.08000 label sits under the last price tag
  add(`<text x="1170" y="${y + 4}">${(0.1 - i * 0.01).toFixed(5)}</text>`);
}
hline(572, 'grid');
hline(612, 'grid');
[541, 657, 692, 730].forEach(y => hline(y, 'pane'));
add('<text x="1170" y="576">400.00M</text><text x="1170" y="616">200.00M</text>');

// last price
add('<path d="M0 262.500H1138" stroke="#2b8c6b" stroke-dasharray="4 5"/>');

// quiet part before the breakout
const quiet = 'grrgrrrgrrggrgrggggrgrrgggrrgrrgrggrrgggrgggrrgrrrggrrggg';
[...quiet].forEach((c, i) => {
  const x = Math.round(LAST_X - (23 + i) * STEP);
  const y = i > 46 ? 455 : i > 35 ? 451 : 452;
  const color = c === 'g' ? '#36b57d' : '#dc5a3c';
  add(`<path d="M${x - 4} ${y}h9" stroke="${color}" stroke-width="2"/>`);
  add(`<path d="M${x - 4} 652h9" stroke="${color}" stroke-width="2"/>`);
});

// high, top, bottom, low, volume top, down flag; the newest candle is last
const candles = [
  [440, 444, 451, 451, 648], [440, 441, 443, 444, 652], [438, 440, 442, 443, 650], [440, 441, 443, 444, 651, 1],
  [441, 442, 444, 444, 651], [421, 425, 442, 442, 637], [396, 403, 424, 424, 628], [400, 402, 403, 406, 639, 1],
  [387, 394, 403, 403, 627], [370, 377, 394, 394, 616], [360, 366, 377, 377, 620], [342, 344, 365, 367, 615],
  [320, 324, 344, 352, 599], [272, 283, 324, 332, 573], [247, 274, 283, 298, 584], [242, 256, 274, 282, 603],
  [238, 255, 257, 291, 588, 1], [250, 253, 257, 266, 625], [246, 253, 275, 277, 615, 1], [269, 275, 286, 298, 600, 1],
  [278, 286, 314, 329, 588, 1], [261, 266, 314, 322, 593], [256, 262, 266, 269, 648]
];
candles.forEach(([high, top, bottom, low, vol, down], i) => {
  const x = Math.round(LAST_X - (candles.length - 1 - i) * STEP) + 0.5;
  const cls = down ? 'candle-down' : 'candle-up';
  add(`<path class="${cls}" d="M${x} ${high}V${top}M${x} ${bottom}V${low}"/>`);
  add(`<rect class="${cls}" x="${x - 4}" y="${top + 0.5}" width="8" height="${bottom - top}"/>`);
  add(`<rect class="${down ? cls : 'vol-up'}" x="${x - 4}" y="${vol + 0.5}" width="8" height="${Math.max(652 - vol, 0)}"/>`);
});
add('<rect x="889.500" y="562.500" width="8" height="90" fill="none" stroke="#77777a" stroke-dasharray="2 2"/>');

// bands and averages
line('yellow', '0,447 10,449 75,453 125,454 150,452 210,451 320,451 380,453 500,450 620,450 635,449 667,442 690,440 700,435 712,422 735,406 746,393 760,375 770,358 780,340 791,318 803,293 814,267 825,247 838,230 848,220 859,213 871,212 882,205 893,199');
line('white', '0,453 60,455 140,455 220,453 420,452 620,452 635,452 660,448 692,445 702,440 712,430 735,417 758,397 770,382 780,368 791,349 803,330 814,311 825,297 838,287 848,283 859,285 871,291 882,286 893,279');
line('white', '0,454 120,456 260,454 460,453 620,453 702,449 735,441 768,429 791,416 814,397 833,379 848,367 859,357 871,350 882,342 893,332');
line('magenta', '0,461 12,459 130,458 240,458 330,455 480,454 620,454 667,457 692,459 702,462 712,469 735,477 758,488 780,501 791,510 803,516 814,520 825,522 838,518 848,511 871,489 882,479 893,465');
line('yellow', '0,457 60,458 140,457 270,454 450,453 620,452 702,449 735,440 767,427 791,412 814,393 833,379 848,369 859,363 871,360 882,354 893,348');

// volume averages
line('white', '0,652 620,652 683,651 698,648 712,643 725,641 735,637 746,630 769,624 780,615 791,606 803,599 814,595 825,590 837,594 848,603 859,607 871,603 882,604 893,610');
line('yellow', '0,653 620,653 693,651 735,643 746,639 769,634 780,628 803,614 825,606 859,603 871,600 882,597 893,603');

// band width and open interest
line('white', '0,686 10,687 648,687 702,686 735,684 760,683 802,679 815,678 840,677 875,679 893,679');
line('white', '0,725 660,725 670,724 697,724 712,721 735,720 755,717 770,715 802,714 848,712 875,714 893,714');

// high and low notes
add('<text class="note" x="788" y="241">0.08888</text><path d="M815 238.500h6M819 236.500l2 2-2 2" stroke="#fff" fill="none"/>');
add('<text class="note" x="105" y="461">0.03195</text><path d="M80 457.500h-6M76 455.500l-2 2 2 2" stroke="#fff" fill="none"/>');

// hand drawn arrows
add('<path class="arrow" d="M646 441L763 278L756 277L781 261L773 288L768 284L648 441z"/>');
add('<path class="arrow" d="M791 391L935 292L932 287L960 282L943 305L939 298L792 392z"/>');
add('<path class="arrow" d="M910 270L924 176L918 176L933 152L939 180L932 178L912 270z"/>');

// axis tags
add('<rect x="1138" y="252" width="64" height="20" fill="#22a67c"/><path d="M1138 262.500h6" stroke="#fff"/><text class="tag" x="1170" y="266">0.08268</text>');
add('<rect x="1138" y="638" width="63" height="19" fill="#cb850f"/><path d="M1138 648.500h6" stroke="#fff"/><text class="tag" x="1170" y="652">18.7M</text>');

// expand frame
add('<path d="M1102.500 155.500h18v16h-18zM1112 159.500h5v5M1111 168.500h-5v-5" fill="none" stroke="#4d4d60"/>');

document.getElementById('chart').innerHTML = out.join('');
```
